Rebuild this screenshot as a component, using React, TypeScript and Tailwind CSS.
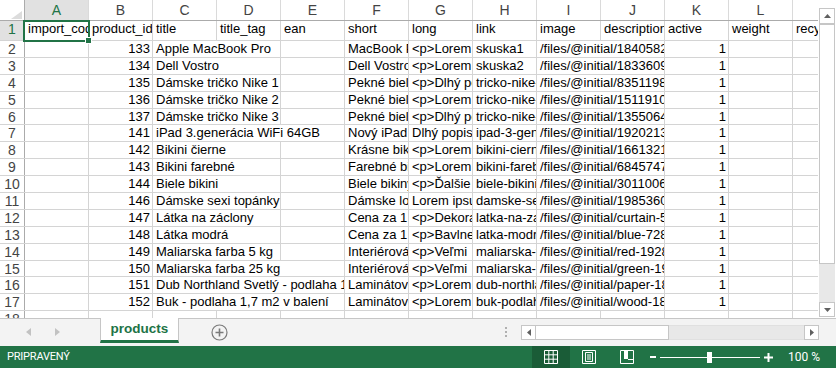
import React from 'react'

type Row = {
  n: number
  id: number
  title: string
  span: number
  short: string
  long: string
  link: string
  image: string
}

const LETTERS = ['A', 'B', 'C', 'D', 'E', 'F', 'G', 'H', 'I', 'J', 'K', 'L', 'M']

const HEAD = ['import_code', 'product_id', 'title', 'title_tag', 'ean', 'short', 'long', 'link', 'image', 'description', 'active', 'weight', 'recycling_fee']

const ROWS: Row[] = [
  { n: 2, id: 133, title: 'Apple MacBook Pro', span: 2, short: 'MacBook Pro 13', long: '<p>Lorem ipsum', link: 'skuska1', image: '/files/@initial/18405821_macbook.jpg' },
  { n: 3, id: 134, title: 'Dell Vostro', span: 2, short: 'Dell Vostro 15', long: '<p>Lorem ipsum', link: 'skuska2', image: '/files/@initial/18336095_dell.jpg' },
  { n: 4, id: 135, title: 'Dámske tričko Nike 1', span: 2, short: 'Pekné biele tričko', long: '<p>Dlhý popis', link: 'tricko-nike-1', image: '/files/@initial/83511984_nike.jpg' },
  { n: 5, id: 136, title: 'Dámske tričko Nike 2', span: 2, short: 'Pekné biele tričko', long: '<p>Lorem ipsum', link: 'tricko-nike-2', image: '/files/@initial/15119104_nike.jpg' },
  { n: 6, id: 137, title: 'Dámske tričko Nike 3', span: 2, short: 'Pekné biele tričko', long: '<p>Dlhý popis', link: 'tricko-nike-3', image: '/files/@initial/13550647_nike.jpg' },
  { n: 7, id: 141, title: 'iPad 3.generácia WiFi 64GB', span: 3, short: 'Nový iPad 3', long: 'Dlhý popis', link: 'ipad-3-generacia', image: '/files/@initial/19202131_ipad.jpg' },
  { n: 8, id: 142, title: 'Bikini čierne', span: 2, short: 'Krásne bikiny', long: '<p>Lorem ipsum', link: 'bikini-cierne', image: '/files/@initial/16613214_bikini.jpg' },
  { n: 9, id: 143, title: 'Bikini farebné', span: 2, short: 'Farebné bikiny', long: '<p>Lorem ipsum', link: 'bikini-farebne', image: '/files/@initial/68457471_bikini.jpg' },
  { n: 10, id: 144, title: 'Biele bikini', span: 2, short: 'Biele bikiny', long: '<p>Ďalšie', link: 'biele-bikini', image: '/files/@initial/30110063_bikini.jpg' },
  { n: 11, id: 146, title: 'Dámske sexi topánky', span: 2, short: 'Dámske lodičky', long: 'Lorem ipsum', link: 'damske-sexi', image: '/files/@initial/19853605_shoes.jpg' },
  { n: 12, id: 147, title: 'Látka na záclony', span: 2, short: 'Cena za 1 m', long: '<p>Dekoračná', link: 'latka-na-zaclony', image: '/files/@initial/curtain-5.jpg' },
  { n: 13, id: 148, title: 'Látka modrá', span: 2, short: 'Cena za 1 m', long: '<p>Bavlnená', link: 'latka-modra', image: '/files/@initial/blue-728.jpg' },
  { n: 14, id: 149, title: 'Maliarska farba 5 kg', span: 2, short: 'Interiérová farba', long: '<p>Veľmi', link: 'maliarska-farba', image: '/files/@initial/red-1928.jpg' },
  { n: 15, id: 150, title: 'Maliarska farba 25 kg', span: 3, short: 'Interiérová farba', long: '<p>Veľmi', link: 'maliarska-farba', image: '/files/@initial/green-1928.jpg' },
  { n: 16, id: 151, title: 'Dub Northland Svetlý - podlaha 1,7 m2', span: 3, short: 'Laminátová podlaha', long: '<p>Lorem ipsum', link: 'dub-northland', image: '/files/@initial/paper-1855.jpg' },
  { n: 17, id: 152, title: 'Buk - podlaha 1,7 m2 v balení', span: 3, short: 'Laminátová podlaha', long: '<p>Lorem ipsum', link: 'buk-podlaha', image: '/files/@initial/wood-1855.jpg' },
]

const font = "font-['Liberation_Sans',Arial,sans-serif]"

function Cell({ text = '', span = 1, right = false }: { text?: string; span?: number; right?: boolean }) {
  const w = span === 3 ? 'w-[192px]' : span === 2 ? 'w-[128px]' : 'w-[64px]'
  return (
    <div
      className={`${w} shrink-0 h-full overflow-hidden whitespace-nowrap border-r border-[#d4d4d4] text-[13px] leading-[16px] text-black ${right ? 'text-right pr-[2px]' : 'pl-[3px]'}`}
    >
      {text}
    </div>
  )
}

function RowHead({ n, active = false }: { n: number; active?: boolean }) {
  return (
    <div
      className={`w-[25px] shrink-0 h-full border-r border-[#ababab] text-center text-[14px] leading-[16px] ${active ? 'bg-[#e1e1e1] text-[#217346]' : 'text-[#444]'}`}
    >
      {n}
    </div>
  )
}

function Sheet() {
  return (
    <div className="relative w-[818px] h-full overflow-hidden bg-white">
      {/* column letters */}
      <div className="flex h-[21px] border-b border-[#ababab]">
        <div className="w-[25px] shrink-0 h-full border-r border-[#ababab] flex items-end justify-end pr-[2px] pb-[1px]">
          <svg width="11" height="8" viewBox="0 0 11 8">
            <path d="M11 0V8H0z" fill="#dcdcdc" />
          </svg>
        </div>
        {LETTERS.map((l, i) => (
          <div
            key={l}
            className={`w-[64px] shrink-0 h-full border-r border-[#dadada] text-center text-[14px] leading-[21px] ${i === 0 ? 'bg-[#e1e1e1] text-[#217346]' : 'text-[#444]'}`}
          >
            {l}
          </div>
        ))}
      </div>

      {/* header row */}
      <div className="flex h-[20px] border-b border-[#d4d4d4] leading-[19px]">
        <RowHead n={1} active />
        {HEAD.map((h) => (
          <Cell key={h} text={h} />
        ))}
      </div>

      {ROWS.map((r) => (
        <div key={r.n} className="flex h-[16.9px] border-b border-[#d4d4d4]">
          <RowHead n={r.n} />
          <Cell />
          <Cell text={String(r.id)} right />
          <Cell text={r.title} span={r.span} />
          {r.span < 2 && <Cell />}
          {r.span < 3 && <Cell />}
          <Cell text={r.short} />
          <Cell text={r.long} />
          <Cell text={r.link} />
          <Cell text={r.image} span={2} />
          <Cell text="1" right />
          <Cell />
          <Cell />
        </div>
      ))}

      <div className="flex h-[16.9px] border-b border-[#d4d4d4]">
        <RowHead n={18} />
        {LETTERS.map((l) => (
          <Cell key={l} />
        ))}
      </div>

      {/* active cell selection */}
      <div className="absolute left-[23px] top-[20px] w-[67px] h-[22px] border-2 border-[#217346]" />
      <div className="absolute left-[85px] top-[37px] w-[7px] h-[7px] bg-[#217346] border border-white" />
    </div>
  )
}

function VScroll() {
  return (
    <div className="w-[18px] h-full bg-white flex flex-col items-end pt-[8px] pb-[1px] pr-[1px]">
      <div className="w-[16px] h-[16px] border border-[#c6c6c6] bg-white flex items-center justify-center">
        <svg width="7" height="4" viewBox="0 0 7 4">
          <path d="M3.5 0L7 4H0z" fill="#606060" />
        </svg>
      </div>
      <div className="w-[16px] flex-1 flex flex-col bg-[#e8e8e8]">
        <div className="h-[240px] border border-[#c6c6c6] bg-white" />
      </div>
      <div className="w-[16px] h-[15px] border border-[#c6c6c6] bg-white flex items-center justify-center">
        <svg width="7" height="4" viewBox="0 0 7 4">
          <path d="M0 0H7L3.5 4z" fill="#606060" />
        </svg>
      </div>
    </div>
  )
}

function TabBar() {
  return (
    <div className="h-[28px] shrink-0 flex items-start bg-[#f3f3f3] border-t border-[#c6c6c6]">
      <div className="flex items-center h-[26px] pl-[26px] gap-[24px]">
        <svg width="5" height="8" viewBox="0 0 5 8">
          <path d="M5 0V8L0 4z" fill="#c2c2c2" />
        </svg>
        <svg width="5" height="8" viewBox="0 0 5 8">
          <path d="M0 0V8L5 4z" fill="#c2c2c2" />
        </svg>
      </div>
      <div className="ml-[40px] -mt-px w-[79px] h-[25px] bg-white border-x border-[#c6c6c6] border-b-[3px] border-b-[#217346] flex items-center justify-center">
        <span className={`${font} text-[13.5px] font-bold text-[#217346]`}>products</span>
      </div>
      <div className="ml-[32px] h-[26px] flex items-center">
        <svg width="17" height="17" viewBox="0 0 17 17">
          <circle cx="8.5" cy="8.5" r="7.5" fill="none" stroke="#7a7a7a" strokeWidth="1.2" />
          <path d="M8.5 4.5v8M4.5 8.5h8" stroke="#7a7a7a" strokeWidth="1.6" />
        </svg>
      </div>
      <div className="ml-[277px] h-[26px] flex flex-col justify-center gap-[2px]">
        <div className="w-[2px] h-[2px] bg-[#b0b0b0]" />
        <div className="w-[2px] h-[2px] bg-[#b0b0b0]" />
        <div className="w-[2px] h-[2px] bg-[#b0b0b0]" />
      </div>
      <div className="ml-[14px] mt-[6px] flex h-[15px]">
        <div className="w-[15px] h-full border border-[#c6c6c6] bg-white flex items-center justify-center">
          <svg width="4" height="7" viewBox="0 0 4 7">
            <path d="M4 0V7L0 3.5z" fill="#606060" />
          </svg>
        </div>
        <div className="w-[133px] h-full border-y border-r border-[#c6c6c6] bg-white" />
        <div className="w-[135px] h-full bg-[#e8e8e8] border-y border-[#e0e0e0]" />
        <div className="w-[15px] h-full border border-[#c6c6c6] bg-white flex items-center justify-center">
          <svg width="4" height="7" viewBox="0 0 4 7">
            <path d="M0 0V7L4 3.5z" fill="#606060" />
          </svg>
        </div>
      </div>
    </div>
  )
}

function StatusBar() {
  return (
    <div className="h-[22px] shrink-0 flex items-center bg-[#217346] text-white">
      <span className="pl-[7px] font-['Roboto',sans-serif] text-[11px] tracking-[-0.2px]">PRIPRAVENÝ</span>
      <div className="ml-auto flex items-center h-full">
        <div className="w-[38px] h-full bg-[#1a5c37] flex items-center justify-center">
          <svg width="14" height="14" viewBox="0 0 14 14" fill="none" stroke="white">
            <path d="M0.5 0.5h13v13h-13zM0.5 4.8h13M0.5 9.2h13M4.8 0.5v13M9.2 0.5v13" />
          </svg>
        </div>
        <div className="ml-[11px] w-[15px] flex justify-center">
          <svg width="14" height="14" viewBox="0 0 14 14" fill="none" stroke="white">
            <path d="M0.5 0.5h13v13h-13z" />
            <path d="M3.5 2.5h7v9h-7z" />
            <path d="M5 5h4M5 7h4M5 9h4" />
          </svg>
        </div>
        <div className="ml-[23px] w-[15px] flex justify-center">
          <svg width="14" height="14" viewBox="0 0 14 14" fill="none" stroke="white">
            <path d="M0.5 0.5h13v13h-13z" />
            <path d="M4 0h4v9h-4z" fill="white" stroke="none" />
            <path d="M8 9.5h5.5" />
          </svg>
        </div>
        <div className="ml-[16px] w-[6px] h-[2px] bg-white" />
        <div className="ml-[4px] relative w-[100px] h-[1px] bg-white">
          <div className="absolute left-[47px] -top-[5px] w-[5px] h-[11px] bg-white" />
        </div>
        <svg className="ml-[4px]" width="9" height="9" viewBox="0 0 9 9">
          <path d="M0 4.5h9M4.5 0v9" stroke="white" strokeWidth="2" />
        </svg>
        <span className="ml-[15px] mr-[16px] font-['Roboto',sans-serif] text-[12px]">100 %</span>
      </div>
    </div>
  )
}

export default function App() {
  return (
    <div className={`w-[836px] h-[368px] overflow-hidden flex flex-col ${font}`}>
      <div className="flex h-[318px] shrink-0">
        <Sheet />
        <VScroll />
      </div>
      <TabBar />
      <StatusBar />
    </div>
  )
}
